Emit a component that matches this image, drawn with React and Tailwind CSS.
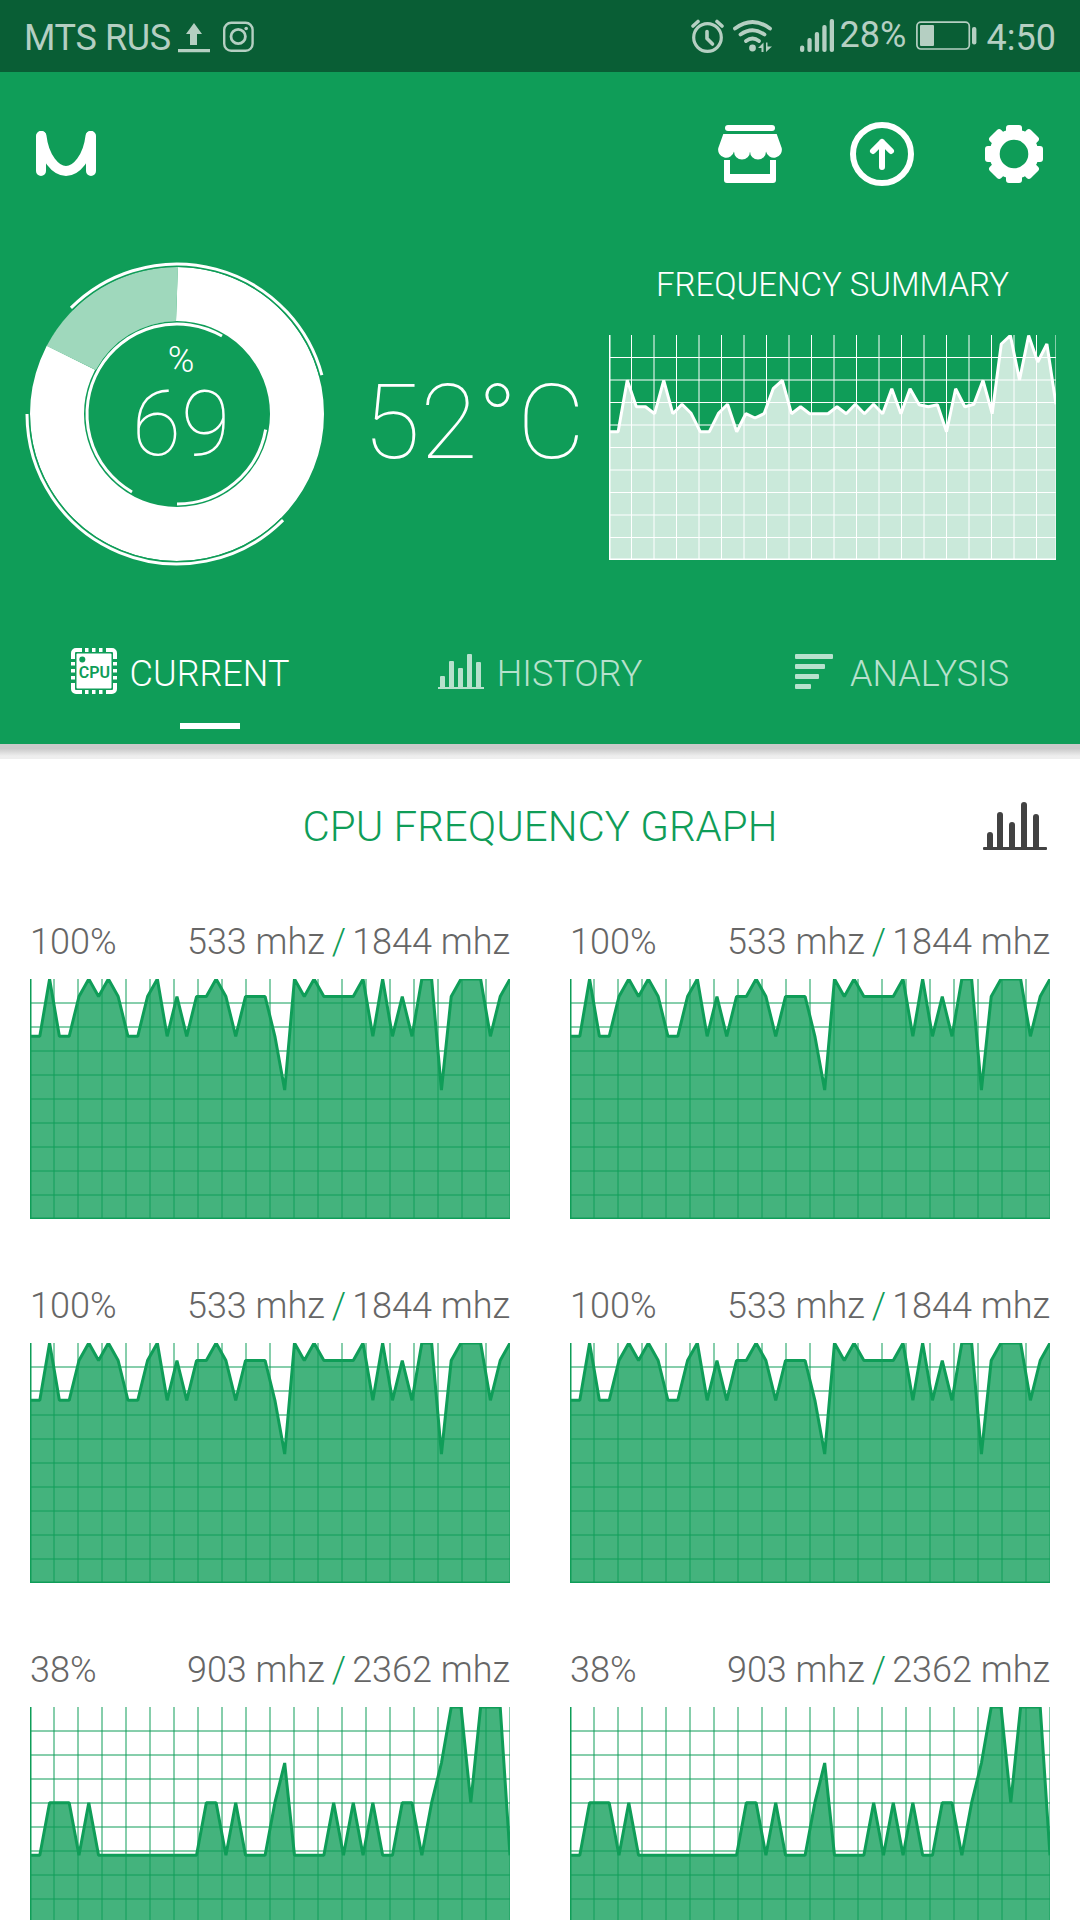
const SUMMARY = [
  96.7, 96.7, 45.3, 71.7, 71.7, 78.7, 45.3, 78.7, 69.3, 78.3, 96.7, 96.7, 78.3,
  69.3, 96.7, 78.7, 83, 78.7, 53.7, 45.3, 78.7, 71.7, 78.7, 78.7, 78.7, 71.7,
  78.7, 69.3, 78.7, 69.3, 78.7, 53.7, 78.7, 53.7, 69.7, 71.7, 69.7, 96.7, 53.7,
  71.7, 69.3, 45.3, 78.7, 9, 0.5, 45, 0.5, 27, 9, 69.3,
];

const LITTLE = [
  57.3, 57.3, 0, 57.3, 57.3, 17.5, 0, 17.5, 0, 17.5, 57.3, 57.3, 17.5, 0, 57.3,
  17.5, 57.3, 17.5, 17.5, 0, 17.5, 57.3, 17.5, 17.5, 17.5, 57.3, 111, 0, 17.5,
  0, 17.5, 17.5, 17.5, 17.5, 0, 57.3, 0, 57.3, 17.5, 57.3, 0, 0, 111, 17.5, 0,
  0, 0, 57.3, 17.5, 0,
];

const BIG = [
  148.3, 148.3, 95.7, 95.7, 95.7, 148.3, 95.7, 148.3, 148.3, 148.3, 148.3,
  148.3, 148.3, 148.3, 148.3, 148.3, 148.3, 148.3, 95.7, 95.7, 148.3, 95.7,
  148.3, 148.3, 148.3, 95.7, 56, 148.3, 148.3, 148.3, 148.3, 95.7, 148.3, 95.7,
  148.3, 95.7, 148.3, 148.3, 95.7, 95.7, 148.3, 95.7, 56, 0, 0, 95.7, 0, 0, 0,
  148.3,
];

const CORES = [
  { load: "100%", cur: "533 mhz", max: "1844 mhz", data: LITTLE },
  { load: "100%", cur: "533 mhz", max: "1844 mhz", data: LITTLE },
  { load: "100%", cur: "533 mhz", max: "1844 mhz", data: LITTLE },
  { load: "100%", cur: "533 mhz", max: "1844 mhz", data: LITTLE },
  { load: "38%", cur: "903 mhz", max: "2362 mhz", data: BIG },
  { load: "38%", cur: "903 mhz", max: "2362 mhz", data: BIG },
];

// Point on a circle, angle in degrees clockwise from 3 o'clock
const polar = (r, deg) => {
  const a = (deg * Math.PI) / 180;
  return `${153 + r * Math.cos(a)} ${153 + r * Math.sin(a)}`;
};

const arc = (r, from, to) =>
  `M${polar(r, from)}A${r} ${r} 0 ${to - from > 180 ? 1 : 0} 1 ${polar(r, to)}`;

function Graph({ data, width, height, step, color }) {
  const points = data.map((y, i) => `${(i * width) / (data.length - 1)},${y}`);
  const cols = Array.from({ length: 19 }, (_, i) => (i + 1) * step);
  const rows = Array.from({ length: 9 }, (_, i) => (i + 1) * step);

  return (
    <svg width={width} height={height} viewBox={`0 0 ${width} ${height}`}>
      <g stroke={color} strokeWidth="1">
        {cols.map((x) => (
          <line key={x} x1={x} x2={x} y1="0" y2={height} />
        ))}
        {rows.map((y) => (
          <line key={y} x1="0" x2={width} y1={y} y2={y} />
        ))}
        <line x1={width} x2={width} y1="0" y2={height} />
        <line x1="0.5" x2="0.5" y1="0" y2={height} />
        <line x1="1" x2="1" y1="0" y2={height} />
        <line x1="0" x2={width} y1={height - 0.5} y2={height - 0.5} />
        <line x1="0" x2={width} y1={height - 1} y2={height - 1} />
      </g>
      <polygon
        points={`0,${height} ${points.join(" ")} ${width},${height}`}
        fill={color}
        fillOpacity="0.78"
      />
      <polyline
        points={points.join(" ")}
        fill="none"
        stroke={color}
        strokeWidth="3"
        strokeLinejoin="bevel"
      />
    </svg>
  );
}

function StatusBar() {
  return (
    <div className="flex h-[72px] items-center bg-[#095e35] pl-6 pr-6 text-[36px] leading-[72px] text-[#b5cfc2]">
      <span className="h-[72px] w-[154px] whitespace-nowrap pt-0.5 tracking-[-0.35px]">
        MTS RUS
      </span>
      <svg width="32" height="72" fill="currentColor">
        <path d="M16 23l8 11h-5v11h-7v-11h-4zM0 49h32v3.2H0z" />
      </svg>
      <svg width="31" height="72" className="ml-[13px]" fill="none" stroke="currentColor" strokeWidth="2.4">
        <rect x="1.2" y="22.8" width="28.4" height="28" rx="7" />
        <circle cx="15.2" cy="36.5" r="7.2" strokeWidth="2.8" />
        <circle cx="23.2" cy="28.5" r="1.8" fill="currentColor" stroke="none" />
      </svg>

      <svg width="34" height="72" className="ml-auto" fill="none" stroke="currentColor" strokeWidth="3.2" strokeLinecap="round">
        <circle cx="16.5" cy="37.5" r="13.8" />
        <path d="M16 31.5v7l5.5 5.5" strokeWidth="3.6" strokeLinejoin="round" />
        <path d="M2 26l5-4.5M31 26l-5-4.5" strokeWidth="3.6" />
      </svg>
      <svg width="40" height="72" className="ml-[8px]" fill="none" stroke="currentColor" strokeWidth="3.8" strokeLinecap="round">
        <path d="M2 28.5Q19.5 15.5 37 28.5M7.5 34.5Q19.500 26 31.5 34.5M13 41Q19.500 36 26 41" />
        <circle cx="19.5" cy="48" r="3.4" fill="currentColor" stroke="none" />
        <path d="M25 48l5.500-5.500v9.500h-2v-4zM33 42.500h1.500v4h4.500l-6 5.500z" fill="currentColor" stroke="none" />
      </svg>
      <svg width="34" height="72" className="ml-[27px]" fill="currentColor">
        <rect x="0" y="45.5" width="4.3" height="6.5" rx="2" />
        <rect x="7.4" y="38" width="4.3" height="14" rx="2" />
        <rect x="14.8" y="32" width="4.3" height="20" rx="2" />
        <rect x="22.3" y="25" width="4.3" height="27" rx="2" />
        <rect x="29.7" y="19" width="4.3" height="33" rx="2" />
      </svg>
      <span className="ml-[6px] h-[72px] w-[68px] leading-[70px]">28%</span>
      <svg width="61" height="72" className="ml-[8px]" fill="currentColor">
        <rect x="0.9" y="22.2" width="52.4" height="26.8" rx="4" fill="none" stroke="currentColor" strokeWidth="1.7" />
        <rect x="4" y="25" width="14" height="21" rx="1" />
        <rect x="56" y="27" width="4.4" height="17.5" rx="2" />
      </svg>
      <span className="ml-[10px] h-[72px] pt-0.5">4:50</span>
    </div>
  );
}

function AppBar() {
  return (
    <div className="flex h-[164px] items-center pl-9 pr-[34px]">
      <svg width="60" height="46" className="mr-auto" fill="none" stroke="#fff" strokeWidth="10" strokeLinecap="round">
        <path d="M5 5V40M55 5V40" />
        <path d="M5.5 5C8 27 20 40 30 40S52 27 54.5 5" />
      </svg>
      <div className="flex gap-[68px]">
        <svg width="64" height="64" fill="#fff">
          <rect x="7" y="3" width="50" height="6" rx="3" />
          <path d="M5.3 12H58.7L63.7 26A8 8 0 0 1 48 29.5A8 8 0 0 1 32 29.5A8 8 0 0 1 16 29.5A8 8 0 0 1 .3 26Z" />
          <path d="M6 38h6v14h40v-14h6v20a3 3 0 0 1-3 3H9a3 3 0 0 1-3-3z" />
        </svg>
        <svg width="64" height="64" fill="none" stroke="#fff" strokeWidth="6" strokeLinecap="round" strokeLinejoin="round">
          <circle cx="32" cy="32" r="29" />
          <path d="M32 45V20M23 29l9-9l9 9" />
        </svg>
        <svg width="64" height="64" fill="#fff">
          <circle cx="32" cy="32" r="19.5" fill="none" stroke="#fff" strokeWidth="10.4" />
          {[0, 45, 90, 135, 180, 225, 270, 315].map((deg) => (
            <rect key={deg} x="24" y="3" width="16" height="12" rx="3" transform={`rotate(${deg} 32 32)`} />
          ))}
        </svg>
      </div>
    </div>
  );
}

function Gauge() {
  return (
    <div className="relative h-[306px] w-[306px]">
      <svg width="306" height="306" fill="none" stroke="#fff">
        <circle cx="153" cy="153" r="120" strokeWidth="54" />
        <path
          d="M154 0L152 60A93 93 0 0 0 71.5 109L22.5 84.5A147 147 0 0 1 154 6Z"
          fill="#0f9d58"
          stroke="none"
        />
        <path
          d="M154 6L152 60A93 93 0 0 0 71.8 109L22.7 85A147 147 0 0 1 154 6Z"
          fill="#9fd8bc"
          stroke="none"
        />
        <g stroke="#0f9d58" strokeWidth="6">
          <path d={arc(150, 225, 345)} />
          <path d={arc(150, 45, 180)} />
        </g>
        <g strokeWidth="3">
          <path d={arc(150, 225, 345)} />
          <path d={arc(150, 45, 180)} />
          <path d={arc(90, 120, 300)} />
          <path d={arc(90, 10, 90)} />
        </g>
      </svg>
      <div className="absolute inset-0 flex flex-col items-center text-white">
        <span className="mt-[79px] pl-2 text-[36px] font-light leading-10">%</span>
        <span className="pl-2 text-[90px] font-thin leading-[90px]">69</span>
      </div>
    </div>
  );
}

function Bars() {
  return (
    <svg width="46" height="46" fill="currentColor">
      <rect x="2" y="28" width="5" height="12" rx="1" />
      <rect x="11" y="13" width="5" height="27" rx="1" />
      <rect x="20" y="20" width="5" height="20" rx="1" />
      <rect x="29" y="6" width="5" height="34" rx="1" />
      <rect x="38" y="14" width="5" height="26" rx="1" />
      <rect x="0" y="39" width="46" height="2" />
    </svg>
  );
}

function CpuIcon() {
  return (
    <svg width="46" height="46" fill="none" stroke="#fff">
      <rect x="5.5" y="5.5" width="35" height="35" rx="1" fill="#fff" stroke="none" />
      <path d="M2 11V5a3 3 0 0 1 3-3H11M35 2H41a3 3 0 0 1 3 3V11M44 35V41a3 3 0 0 1-3 3H35M11 44H5a3 3 0 0 1-3-3V35" strokeWidth="4" />
      <path d="M14 2H32M14 44H32" strokeWidth="4" strokeDasharray="3.5 3.5" />
      <path d="M2 14V32M44 14V32" strokeWidth="4" strokeDasharray="3.5 3.5" />
      <circle cx="11.3" cy="11.5" r="3" fill="#0f9d58" stroke="none" />
      <text x="23.3" y="29.5" textAnchor="middle" fill="#0f9d58" stroke="none" className="text-[16px] font-semibold">
        CPU
      </text>
    </svg>
  );
}

function Tabs() {
  return (
    <div className="mt-auto grid h-[146px] grid-cols-3 text-[36px] font-light text-white">
      <div className="flex flex-col items-center">
        <div className="mt-[50px] flex h-[46px] items-center gap-[13px]">
          <CpuIcon />
          <span className="pt-1.5">CURRENT</span>
        </div>
        <div className="ml-[60px] mt-[29px] h-1.5 w-[60px] bg-white" />
      </div>
      <div className="flex justify-center text-[#b7e1cd]">
        <div className="mt-[50px] flex h-[46px] items-center gap-[13px]">
          <Bars />
          <span className="pt-1.5">HISTORY</span>
        </div>
      </div>
      <div className="flex justify-center text-[#b7e1cd]">
        <div className="mt-[50px] flex h-[46px] items-center gap-[13px]">
          <svg width="46" height="46" fill="currentColor">
            <rect x="4" y="6" width="38" height="5" rx="1" />
            <rect x="4" y="16" width="30" height="5" rx="1" />
            <rect x="4" y="26" width="24" height="5" rx="1" />
            <rect x="4" y="36" width="16" height="5" rx="1" />
          </svg>
          <span className="pt-1.5">ANALYSIS</span>
        </div>
      </div>
    </div>
  );
}

function Core({ load, cur, max, data }) {
  return (
    <div className="h-[364px]">
      <div className="flex h-[63px] justify-between text-[36px] font-light leading-[52px] text-[#666]">
        <span>{load}</span>
        <span className="flex">
          {cur}
          <span className="ml-[7px] mr-[6px] text-[#0f9d58]">/</span>
          {max}
        </span>
      </div>
      <Graph data={data} width={480} height={240} step={24} color="#0f9d58" />
    </div>
  );
}

export default function App() {
  return (
    <div className="h-[1920px] w-[1080px] overflow-hidden bg-white font-[Roboto,sans-serif]">
      <StatusBar />
      <header className="flex h-[672px] flex-col bg-[#0f9d58]">
        <AppBar />
        <div className="flex pl-6 pr-6 pt-[25px]">
          <Gauge />
          <div className="ml-[33px] mt-[102px] w-[246px] whitespace-nowrap text-[104.5px] font-thin leading-[120px] text-white">
            52°C
          </div>
          <div className="flex w-[447px] flex-col items-center">
            <h2 className="h-[74px] text-[33px] font-light leading-[47px] text-white">
              FREQUENCY SUMMARY
            </h2>
            <Graph data={SUMMARY} width={447} height={225} step={22.5} color="#ffffff" />
          </div>
        </div>
        <Tabs />
      </header>
      <div className="h-[15px] bg-linear-to-b from-[#cacaca] from-30% to-[#eee] to-80%" />

      <main>
        <div className="grid h-[157px] grid-cols-[1fr_auto_1fr] px-[33px]">
          <h1 className="col-start-2 pt-[43px] text-[42px] font-light leading-[50px] text-[#0f9d58]">
            CPU FREQUENCY GRAPH
          </h1>
          <svg width="64" height="48" className="mt-[43px] justify-self-end" fill="#424242">
            <rect x="4" y="30" width="6" height="20" rx="3" />
            <rect x="14" y="10" width="6" height="40" rx="3" />
            <rect x="26" y="20" width="6" height="30" rx="3" />
            <rect x="38" y="0" width="6" height="50" rx="3" />
            <rect x="50" y="12" width="6" height="38" rx="3" />
            <rect x="0" y="45" width="64" height="3" rx="1" />
          </svg>
        </div>
        <div className="grid grid-cols-2 gap-x-[60px] px-[30px]">
          {CORES.map((core, i) => (
            <Core key={i} {...core} />
          ))}
        </div>
      </main>
    </div>
  );
}
